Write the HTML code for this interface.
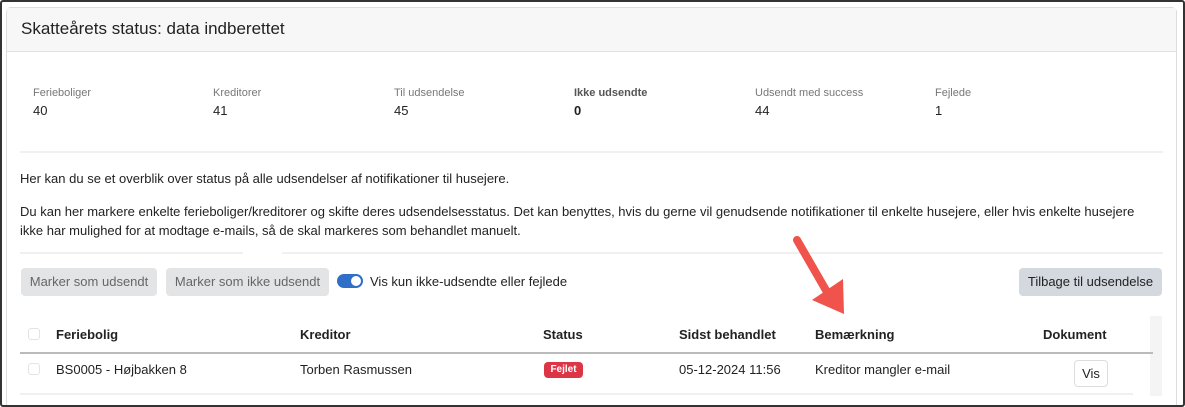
<!DOCTYPE html>
<html style="width:1185px;height:407px;overflow:hidden"><head><meta charset="utf-8"><style>
*{box-sizing:border-box;margin:0;padding:0}
body{width:1185px;height:407px;background:#fff;font-family:"Liberation Sans",Arial,sans-serif;color:#222;position:relative;overflow:hidden}
.frame{position:absolute;left:0;top:0;width:1185px;height:407px;border:2px solid #333;border-radius:3px}
.card{position:absolute;left:6px;top:7px;width:1171px;height:398px;border:1px solid #ddd;border-bottom:none;border-radius:5px 5px 0 0}
.hdr{position:absolute;left:0;top:0;right:0;height:44px;background:#f7f7f7;border-bottom:1px solid #e2e2e2}
.hdr span{position:absolute;left:14px;top:11px;font-size:17px;color:#222}
.a{position:absolute;white-space:nowrap}
.lbl{font-size:11px;color:#777}
.val{font-size:13px;color:#222}
.p{font-size:13px;color:#222}
.hl{position:absolute;height:2px;background:#f0f0f0}
.btn{position:absolute;height:28px;border-radius:4px;background:#e3e4e6;color:#666;font-size:13px;line-height:28px;text-align:center}
.th{font-size:13px;font-weight:bold;color:#222}
.td{font-size:13px;color:#222}
.cb{position:absolute;width:12px;height:12px;border:1px solid #e4e4e4;border-radius:3px}
</style></head><body>
<div class="card"><div class="hdr"><span>Skatteårets status: data indberettet</span></div></div>

<div class="a lbl" style="left:33px;top:87px">Ferieboliger</div><div class="a val" style="left:33px;top:103px">40</div>
<div class="a lbl" style="left:213px;top:87px">Kreditorer</div><div class="a val" style="left:213px;top:103px">41</div>
<div class="a lbl" style="left:394px;top:87px">Til udsendelse</div><div class="a val" style="left:394px;top:103px">45</div>
<div class="a lbl" style="left:574px;top:87px;font-weight:bold;color:#555">Ikke udsendte</div><div class="a val" style="left:574px;top:103px;font-weight:bold">0</div>
<div class="a lbl" style="left:755px;top:87px">Udsendt med success</div><div class="a val" style="left:755px;top:103px">44</div>
<div class="a lbl" style="left:935px;top:87px">Fejlede</div><div class="a val" style="left:935px;top:103px">1</div>

<div class="hl" style="left:20px;top:151px;width:1143px"></div>
<div class="a p" style="left:20px;top:171px">Her kan du se et overblik over status på alle udsendelser af notifikationer til husejere.</div>
<div class="a p" style="left:20px;top:204px">Du kan her markere enkelte ferieboliger/kreditorer og skifte deres udsendelsesstatus. Det kan benyttes, hvis du gerne vil genudsende notifikationer til enkelte husejere, eller hvis enkelte husejere</div>
<div class="a p" style="left:20px;top:223px">ikke har mulighed for at modtage e-mails, så de skal markeres som behandlet manuelt.</div>
<div class="hl" style="left:20px;top:252px;width:223px"></div>
<div class="hl" style="left:282px;top:252px;width:881px"></div>

<div class="btn" style="left:21px;top:268px;width:136px">Marker som udsendt</div>
<div class="btn" style="left:166px;top:268px;width:163px">Marker som ikke udsendt</div>
<div class="a" style="left:337px;top:274px;width:26px;height:14px;border-radius:7px;background:#2f6fc8"><div style="position:absolute;right:2px;top:2px;width:10px;height:10px;border-radius:50%;background:#fff"></div></div>
<div class="a p" style="left:370px;top:274px">Vis kun ikke-udsendte eller fejlede</div>
<div class="btn" style="left:1019px;top:268px;width:143px;background:#d4d8df;color:#222">Tilbage til udsendelse</div>

<div class="a" style="left:1150px;top:316px;width:12px;height:80px;background:#f4f4f4"></div>
<div class="cb" style="left:28px;top:328px"></div>
<div class="a th" style="left:56px;top:327px">Feriebolig</div>
<div class="a th" style="left:300px;top:327px">Kreditor</div>
<div class="a th" style="left:543px;top:327px">Status</div>
<div class="a th" style="left:679px;top:327px">Sidst behandlet</div>
<div class="a th" style="left:815px;top:327px">Bemærkning</div>
<div class="a th" style="left:1043px;top:327px">Dokument</div>
<div class="a" style="left:20px;top:352px;width:1133px;height:2px;background:#bbb"></div>

<div class="cb" style="left:28px;top:363px"></div>
<div class="a td" style="left:56px;top:362px">BS0005 - Højbakken 8</div>
<div class="a td" style="left:300px;top:362px">Torben Rasmussen</div>
<div class="a" style="left:544px;top:362px;width:39px;height:16px;border-radius:4px;background:#dc3545;color:#fff;font-size:10px;font-weight:bold;line-height:16px;text-align:center">Fejlet</div>
<div class="a td" style="left:679px;top:362px">05-12-2024 11:56</div>
<div class="a td" style="left:815px;top:362px">Kreditor mangler e-mail</div>
<div class="a" style="left:1074px;top:360px;width:34px;height:27px;border:1px solid #ddd;border-radius:4px;font-size:13px;line-height:25px;text-align:center">Vis</div>
<div class="hl" style="left:20px;top:393px;width:1113px"></div>

<svg class="a" style="left:780px;top:230px" width="80" height="100" viewBox="0 0 80 100">
<line x1="17" y1="10" x2="47" y2="62" stroke="#f0534b" stroke-width="8" stroke-linecap="round"/>
<polygon points="64,84 63,49 32,70" fill="#f0534b"/>
</svg>
<div class="frame"></div>
</body></html>
